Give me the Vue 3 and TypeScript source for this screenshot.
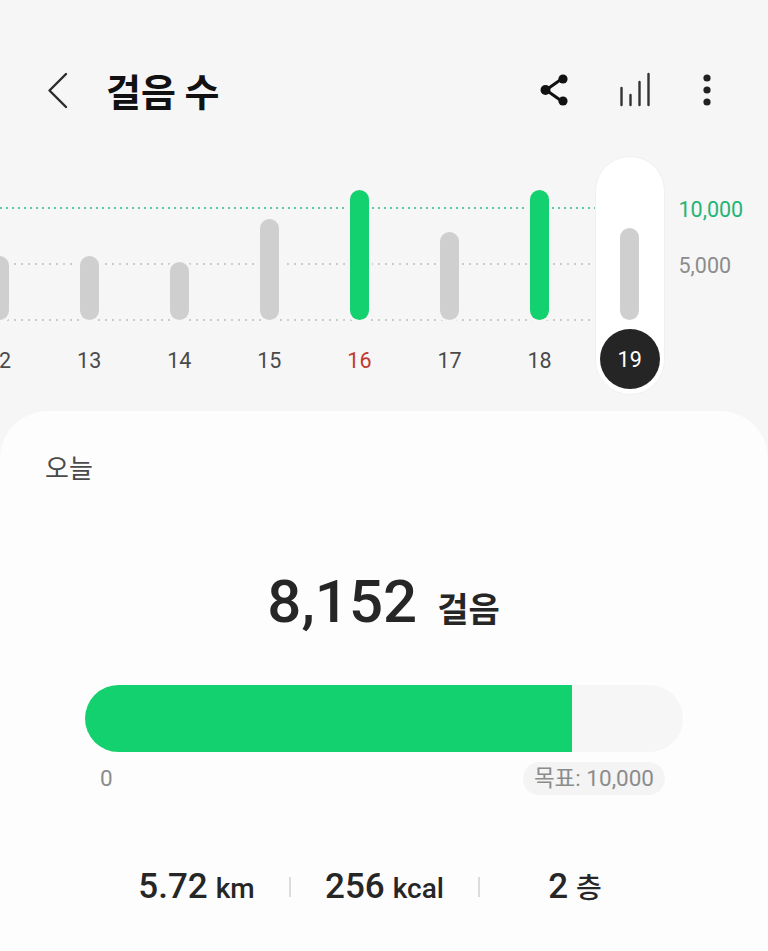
<script setup lang="ts">
interface Day {
  label: string
  height: number
  green?: boolean
  red?: boolean
  selected?: boolean
}

const days: Day[] = [
  { label: '12', height: 64 },
  { label: '13', height: 64 },
  { label: '14', height: 58 },
  { label: '15', height: 101 },
  { label: '16', height: 130, green: true, red: true },
  { label: '17', height: 88 },
  { label: '18', height: 130, green: true },
  { label: '19', height: 92, selected: true },
]

const stats = [
  { value: '5.72', unit: 'km' },
  { value: '256', unit: 'kcal' },
  { value: '2', unit: '층' },
]
</script>

<template>
  <div class="page">
    <header class="top">
      <svg class="back" width="24" height="40" viewBox="0 0 24 40">
        <path d="M20 4 L3.5 20.5 L20 37" fill="none" stroke="#2a2a2a" stroke-width="2.4" stroke-linecap="round" stroke-linejoin="round" />
      </svg>
      <h1 class="title">걸음 수</h1>
      <div class="actions">
        <svg width="30" height="34" viewBox="0 0 30 34">
          <path d="M24 5 L7 17 L24 29" fill="none" stroke="#111" stroke-width="3" />
          <circle cx="24" cy="6" r="4.6" fill="#111" />
          <circle cx="6.5" cy="17" r="5" fill="#111" />
          <circle cx="24" cy="28" r="4.6" fill="#111" />
        </svg>
        <svg class="levels" width="34" height="36" viewBox="0 0 34 36">
          <path d="M2.5 33 V16 M11.5 33 V23 M20.5 33 V10 M29.5 33 V2" fill="none" stroke="#333" stroke-width="2.4" stroke-linecap="round" />
        </svg>
        <svg class="more" width="10" height="34" viewBox="0 0 10 34">
          <circle cx="5" cy="5" r="3.6" fill="#222" />
          <circle cx="5" cy="17" r="3.6" fill="#222" />
          <circle cx="5" cy="29" r="3.6" fill="#222" />
        </svg>
      </div>
    </header>

    <section class="chart">
      <div class="line line-goal"></div>
      <div class="line line-mid"></div>
      <div class="line line-base"></div>
      <div class="axis axis-goal">10,000</div>
      <div class="axis axis-mid">5,000</div>
      <div class="columns">
        <div v-for="d in days" :key="d.label" class="col">
          <div v-if="d.selected" class="pill"></div>
          <div class="plot">
            <div class="bar" :class="{ green: d.green }" :style="{ height: d.height + 'px' }"></div>
          </div>
          <div class="day" :class="{ red: d.red, current: d.selected }">{{ d.label }}</div>
        </div>
      </div>
    </section>

    <main class="card">
      <div class="today">오늘</div>
      <div class="count"><span class="num">8,152</span><span class="steps">걸음</span></div>
      <div class="track"><div class="fill" :style="{ width: '81.52%' }"></div></div>
      <div class="scale">
        <span class="zero">0</span>
        <span class="goal">목표: 10,000</span>
      </div>
      <div class="stats">
        <template v-for="(s, i) in stats" :key="s.unit">
          <span v-if="i > 0" class="sep"></span>
          <div class="stat"><span class="val">{{ s.value }}</span><span class="unit">{{ s.unit }}</span></div>
        </template>
      </div>
    </main>
  </div>
</template>

<style scoped>
.page {
  width: 768px;
  height: 951px;
  overflow: hidden;
  display: flex;
  flex-direction: column;
  background: #f6f6f6;
  font-family: Roboto, "Noto Sans CJK KR", sans-serif;
}

.top {
  height: 157px;
  box-sizing: border-box;
  padding: 0 56px 0 46px;
  display: flex;
  align-items: center;
}
.back {
  flex: none;
  margin-top: 23px;
}
.title {
  margin: 23px 0 0 36px;
  font-size: 38px;
  line-height: 44px;
  font-weight: 700;
  color: #111;
  font-family: "Noto Sans CJK KR", sans-serif;
}
.actions {
  margin-left: auto;
  margin-top: 23px;
  display: flex;
  align-items: center;
}
.levels {
  margin-left: 50px;
}
.more {
  margin-left: 49px;
}

.chart {
  position: relative;
  height: 254px;
  flex: none;
}
.line {
  position: absolute;
  left: 0;
  width: 596px;
  height: 2px;
  background-image: linear-gradient(90deg, #cbcbcb 2px, transparent 2px);
  background-size: 7px 2px;
}
.line-goal {
  top: 50px;
  background-image: linear-gradient(90deg, #63c9a0 2px, transparent 2px);
  background-size: 6px 2px;
}
.line-mid {
  top: 106px;
}
.line-base {
  top: 162px;
}
.axis {
  position: absolute;
  left: 678.5px;
  font-size: 21.5px;
  line-height: 26px;
}
.axis-goal {
  top: 40px;
  color: #1fb574;
}
.axis-mid {
  top: 96px;
  color: #8c8c8c;
}
.columns {
  position: relative;
  display: flex;
  margin-left: -46px;
}
.col {
  position: relative;
  width: 90.1px;
  flex: none;
  display: flex;
  flex-direction: column;
  align-items: center;
}
.pill {
  position: absolute;
  top: -1px;
  left: 10px;
  width: 70px;
  height: 239px;
  box-sizing: border-box;
  background: #fff;
  border: 1px solid #f0f0f0;
  border-radius: 35px;
}
.plot {
  position: relative;
  height: 163px;
  display: flex;
  align-items: flex-end;
}
.bar {
  width: 19px;
  border-radius: 10px;
  background: #cfcfcf;
  box-shadow: 0 0 0 3px #f6f6f6;
}
.col:last-child .bar {
  box-shadow: none;
}
.bar.green {
  background: #13d16f;
}
.day {
  position: relative;
  margin-top: 9px;
  width: 60px;
  height: 60px;
  border-radius: 50%;
  display: flex;
  align-items: center;
  justify-content: center;
  padding-top: 2px;
  box-sizing: border-box;
  font-size: 21.5px;
  color: #4a4a4a;
}
.day.red {
  color: #c0392f;
}
.day.current {
  padding-top: 0;
  background: #252525;
  color: #fff;
}

.card {
  flex: 1;
  background: #fdfdfd;
  border-radius: 48px 48px 0 0;
  padding-top: 40px;
  display: flex;
  flex-direction: column;
}
.today {
  margin-left: 45px;
  font-size: 26px;
  line-height: 32px;
  color: #4a4a4a;
  font-family: "Noto Sans CJK KR", sans-serif;
}
.count {
  margin: 84px 0 0 -1px;
  display: flex;
  justify-content: center;
  align-items: baseline;
  color: #262626;
  height: 70px;
}
.num {
  font-size: 60px;
  line-height: 70px;
  font-weight: 500;
}
.steps {
  margin-left: 20px;
  font-size: 34px;
  font-weight: 700;
  font-family: "Noto Sans CJK KR", sans-serif;
}
.track {
  margin: 48px 0 0 85px;
  width: 598px;
  height: 67px;
  border-radius: 34px;
  background: #f6f6f6;
  overflow: hidden;
}
.fill {
  height: 100%;
  background: #13d16f;
}
.scale {
  margin: 10px 103px 0 100px;
  display: flex;
  justify-content: space-between;
  align-items: center;
  color: #8c8c8c;
  font-size: 22.5px;
}
.zero {
  margin-top: -2px;
}
.goal {
  padding: 0 11px;
  height: 33px;
  line-height: 33px;
  border-radius: 17px;
  background: #f4f4f4;
}
.stats {
  margin-top: 70px;
  margin-left: 104px;
  display: grid;
  grid-template-columns: 185px 2px 187px 2px 190px;
  align-items: center;
  color: #262626;
}
.stat {
  display: flex;
  justify-content: center;
  align-items: baseline;
  white-space: nowrap;
}
.val {
  font-size: 35px;
  line-height: 44px;
  font-weight: 500;
}
.unit {
  margin-left: 8px;
  font-size: 28px;
  font-weight: 500;
}
.sep {
  width: 2px;
  height: 20px;
  background: #dcdcdc;
}
</style>

<style>
body {
  background: #f6f6f6;
}
</style>
